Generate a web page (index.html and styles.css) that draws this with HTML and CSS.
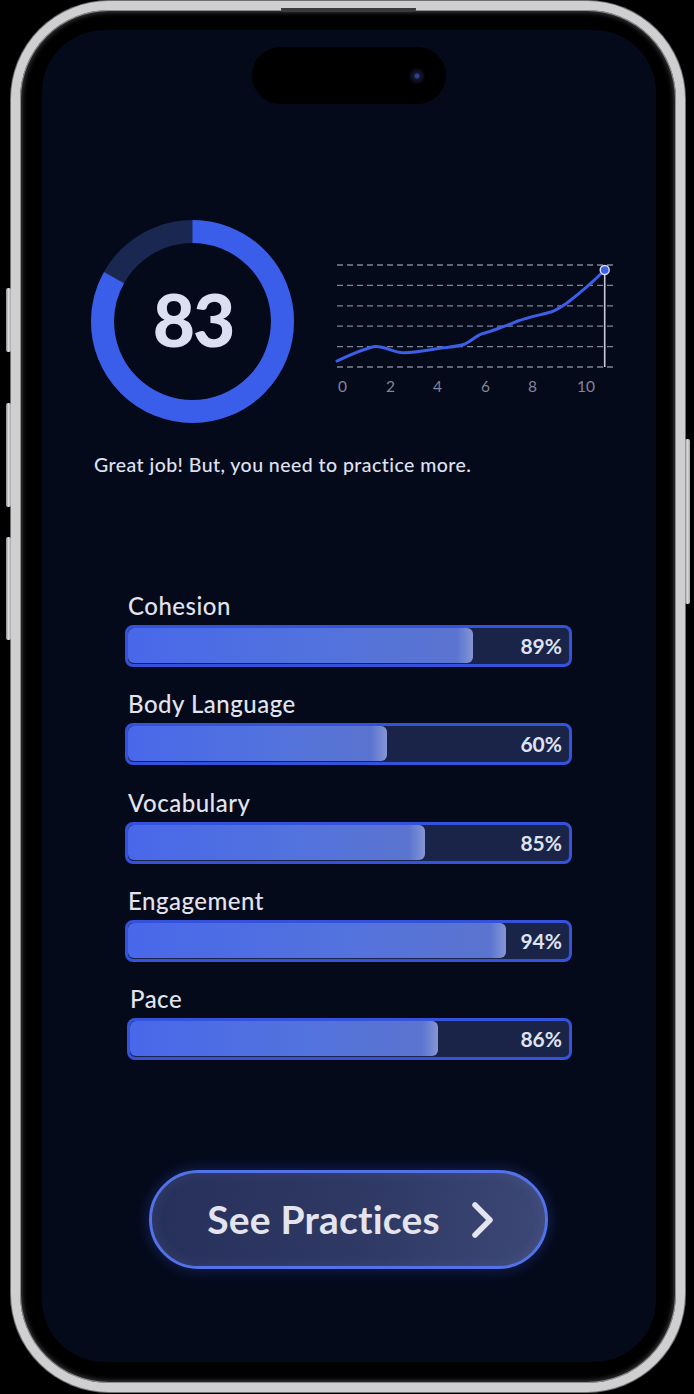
FILE: index.html
```html
<!DOCTYPE html>
<html lang="en">
<head>
<meta charset="utf-8">
<title>Speech Score</title>
<link rel="stylesheet" href="styles.css">
</head>
<body>
<div class="phone">
  <span class="side-btn side-action"></span>
  <span class="side-btn side-volup"></span>
  <span class="side-btn side-voldown"></span>
  <span class="side-btn side-power"></span>
  <span class="speaker"></span>
  <div class="screen">
    <div class="island"><span class="camera"></span></div>

    <section class="summary">
      <svg class="ring" width="204" height="204" viewBox="0 0 204 204">
        <circle class="ring-track" cx="101.5" cy="101.5" r="90"/>
        <circle class="ring-value" cx="101.5" cy="101.5" r="90" stroke-dasharray="469.36 565.49" transform="rotate(-90 101.5 101.5)"/>
        <text class="ring-num" x="102" y="127">83</text>
      </svg>

      <svg class="chart" width="282" height="140" viewBox="0 0 282 140">
        <g class="grid">
          <line x1="2" y1="5" x2="278" y2="5"/>
          <line x1="2" y1="25.4" x2="278" y2="25.4"/>
          <line x1="2" y1="45.8" x2="278" y2="45.8"/>
          <line x1="2" y1="66.2" x2="278" y2="66.2"/>
          <line x1="2" y1="86.6" x2="278" y2="86.6"/>
          <line x1="2" y1="107" x2="278" y2="107"/>
        </g>
        <line class="marker" x1="269.7" y1="10" x2="269.7" y2="107"/>
        <path class="trend" d="M2 101 C 15 95, 30 88, 40 86.5 C 48 85.5, 55 91, 66 92.5 C 75 93.5, 90 90.5, 103 88.5 C 113 87, 122 87, 130 84 C 138 80, 142 75, 148 73.5 C 156 71.5, 170 66, 183 61 C 192 57.5, 205 55, 216 52 C 222 50, 226 47, 232 43 C 245 33, 258 22, 269.7 10"/>
        <circle class="dot" cx="269.7" cy="10" r="4.5"/>
        <g class="axis">
          <text x="3" y="132">0</text>
          <text x="51" y="132">2</text>
          <text x="98" y="132">4</text>
          <text x="146" y="132">6</text>
          <text x="193" y="132">8</text>
          <text x="242" y="132">10</text>
        </g>
      </svg>
    </section>

    <p class="message">Great job! But, you need to practice more.</p>

    <ul class="skills">
      <li class="skill">
        <span class="skill-name">Cohesion</span>
        <div class="bar"><div class="fill" style="width:78.2%"></div><span class="pct">89%</span></div>
      </li>
      <li class="skill">
        <span class="skill-name">Body Language</span>
        <div class="bar"><div class="fill" style="width:58.7%"></div><span class="pct">60%</span></div>
      </li>
      <li class="skill">
        <span class="skill-name">Vocabulary</span>
        <div class="bar"><div class="fill" style="width:67.3%"></div><span class="pct">85%</span></div>
      </li>
      <li class="skill">
        <span class="skill-name">Engagement</span>
        <div class="bar"><div class="fill" style="width:85.7%"></div><span class="pct">94%</span></div>
      </li>
      <li class="skill skill-shift">
        <span class="skill-name">Pace</span>
        <div class="bar"><div class="fill" style="width:70.1%"></div><span class="pct">86%</span></div>
      </li>
    </ul>

    <button class="cta" type="button">
      <span class="cta-label">See Practices</span>
      <svg class="cta-chevron" width="24" height="36" viewBox="0 0 24 36">
        <polyline points="4,3 19,18 4,33"/>
      </svg>
    </button>
  </div>
</div>
</body>
</html>
```

FILE: styles.css
```css
* { box-sizing: border-box; }

html, body {
  margin: 0;
  padding: 0;
  background: #000;
}

body {
  width: 694px;
  height: 1394px;
  overflow: hidden;
  font-family: Lato, "Noto Sans", sans-serif;
}

.phone {
  position: relative;
  margin: 1px 0 0 11px;
  width: 674px;
  height: 1391px;
  border: 9px solid #cfcfd1;
  border-radius: 98px;
  padding: 20px 20px 21px 22px;
  background: #000;
  box-shadow:
    0 0 0 1px #6e6e70,
    inset 0 0 0 1px #8d8d90,
    inset 0 0 5px 2px rgba(120, 120, 125, 0.55);
}

.side-btn {
  position: absolute;
  width: 5px;
  background: linear-gradient(90deg, #8d8d90, #d9d9db 50%, #a9a9ac);
  border-radius: 2px;
}
.side-action { left: -14px; top: 278px; height: 64px; }
.side-volup { left: -14px; top: 393px; height: 104px; }
.side-voldown { left: -14px; top: 527px; height: 103px; }
.side-power { left: 665px; top: 429px; height: 165px; }

.speaker {
  position: absolute;
  left: 261px;
  top: -2px;
  width: 135px;
  height: 4px;
  border-radius: 0 0 3px 3px;
  background: #3a3a3c;
}

.screen {
  position: relative;
  width: 614px;
  height: 1332px;
  border-radius: 62px;
  background: #050a1b;
  overflow: hidden;
}

.island {
  position: absolute;
  left: 210px;
  top: 17px;
  width: 194px;
  height: 57px;
  border-radius: 29px;
  background: #000;
}

.camera {
  position: absolute;
  left: 157px;
  top: 21px;
  width: 16px;
  height: 16px;
  border-radius: 50%;
  background: radial-gradient(circle, #2f3f8c 0 2px, #121833 3px, #0a0d1c 6px, #050507 8px);
}

/* summary row */
.summary {
  display: flex;
  align-items: flex-start;
  padding: 190px 0 0 49px;
}

.ring { display: block; flex: none; }
.ring-track { fill: none; stroke: #1a2750; stroke-width: 23; }
.ring-value { fill: none; stroke: #3a5ee9; stroke-width: 23; }
.ring-num {
  fill: #dcdef2;
  font-family: Lato, "Noto Sans", sans-serif;
  font-weight: 900;
  font-size: 73px;
  text-anchor: middle;
  letter-spacing: -2px;
}

.chart {
  display: block;
  flex: none;
  margin: 40px 0 0 40px;
}
.grid line {
  stroke: #7f8496;
  stroke-width: 1.3;
  stroke-dasharray: 6 4;
}
.marker { stroke: #c8cbdc; stroke-width: 1.6; }
.trend {
  fill: none;
  stroke: #3b5fe6;
  stroke-width: 3;
  stroke-linecap: round;
  stroke-linejoin: round;
}
.dot { fill: #3b5fe6; stroke: #d8dcf0; stroke-width: 1.4; }
.axis text {
  fill: #80859a;
  font-family: Lato, "Noto Sans", sans-serif;
  font-size: 15.5px;
}

.message {
  margin: 29px 0 0 52px;
  font-size: 19.5px;
  line-height: 24px;
  font-weight: 500;
  letter-spacing: 0.45px;
  color: #dfe1f0;
}

/* skills */
.skills {
  list-style: none;
  margin: 115px 0 0 83px;
  padding: 0;
  width: 447px;
  display: flex;
  flex-direction: column;
  gap: 23.25px;
}

.skill {
  display: flex;
  flex-direction: column;
  gap: 5px;
}
.skill-shift { margin-left: 2px; }

.skill-name {
  padding-left: 3px;
  font-size: 24px;
  line-height: 28px;
  font-weight: 500;
  letter-spacing: 0.5px;
  color: #e2e3ec;
}

.bar {
  display: grid;
  height: 42px;
  border: 3px solid #3452dc;
  border-radius: 8px;
  padding-bottom: 1px;
  background: #1a2448;
}

.fill {
  grid-area: 1 / 1;
  height: 100%;
  border-radius: 6px;
  background: linear-gradient(90deg, #4868ea 0%, #5272de 55%, #5b74cf calc(100% - 16px), #8596d6 100%);
}

.pct {
  grid-area: 1 / 1;
  justify-self: end;
  align-self: center;
  padding-right: 7px;
  font-size: 21px;
  font-weight: 700;
  color: #dfe2f2;
  line-height: 1;
}

/* call to action */
.cta {
  margin: 110px 0 0 107px;
  width: 399px;
  height: 99px;
  border: 3px solid #5372e8;
  border-radius: 50px;
  background: linear-gradient(100deg, #27305a 0%, #2f3964 55%, #3d4877 100%);
  box-shadow:
    0 0 14px rgba(60, 95, 235, 0.35),
    inset 0 0 14px rgba(150, 170, 255, 0.12);
  display: flex;
  align-items: center;
  justify-content: center;
  gap: 31px;
  padding: 0 0 0 5px;
  font-family: Lato, "Noto Sans", sans-serif;
  cursor: pointer;
}

.cta-label {
  font-size: 39px;
  font-weight: 700;
  letter-spacing: 0.2px;
  color: #e3e4ee;
  line-height: 1;
}

.cta-chevron { display: block; }
.cta-chevron polyline {
  fill: none;
  stroke: #e3e4ee;
  stroke-width: 5.5;
  stroke-linecap: round;
  stroke-linejoin: round;
}
```
